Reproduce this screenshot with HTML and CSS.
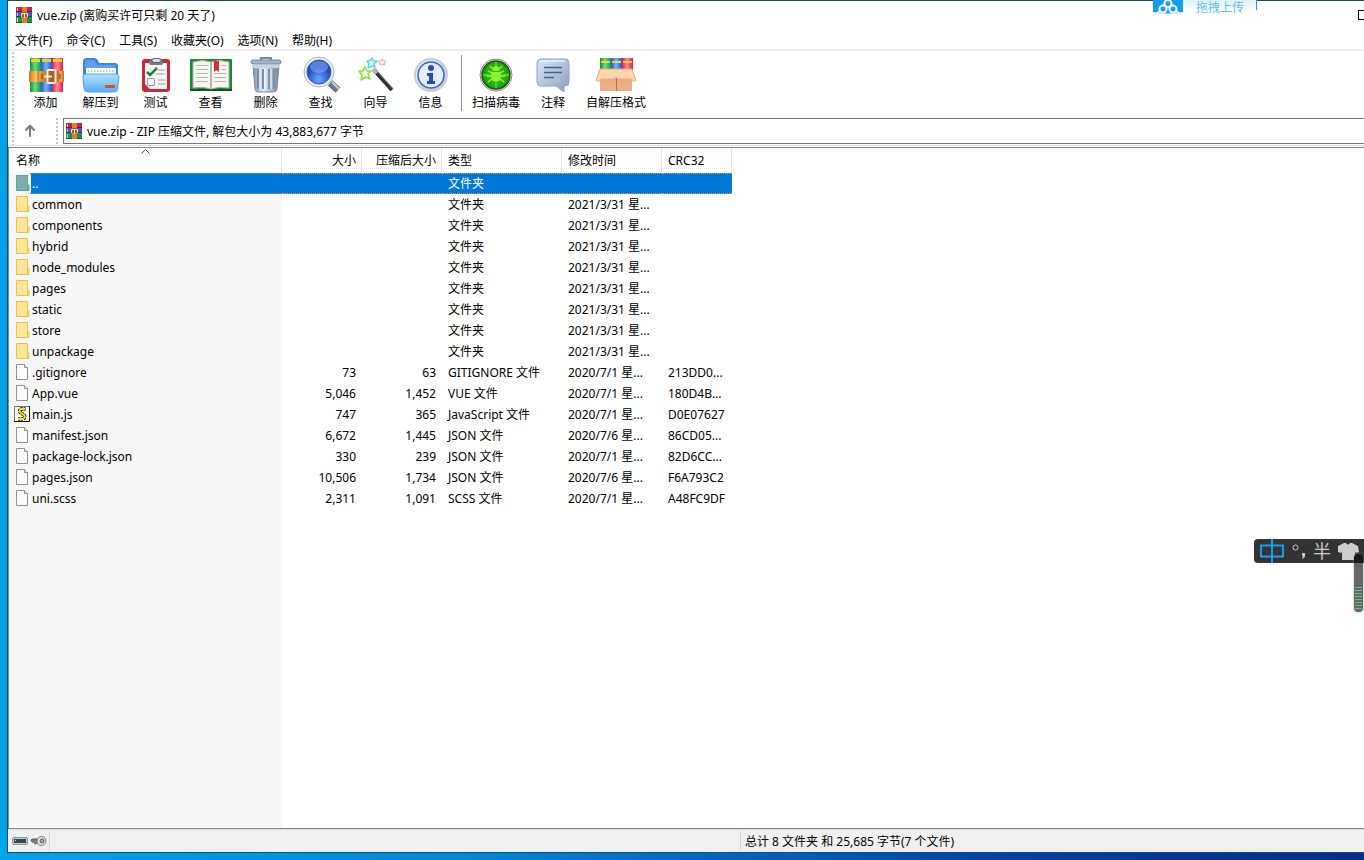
FILE: index.html
```html
<!DOCTYPE html>
<html lang="zh-CN">
<head>
<meta charset="utf-8">
<title>vue.zip</title>
<link rel="stylesheet" href="styles.css">
</head>
<body>
<svg class="defs" width="0" height="0" aria-hidden="true">
  <defs>
    <linearGradient id="gGreen"><stop offset="0" stop-color="#0c8a3c"/><stop offset=".45" stop-color="#6fdc7e"/><stop offset="1" stop-color="#139a40"/></linearGradient>
    <linearGradient id="gBlue"><stop offset="0" stop-color="#1f55d4"/><stop offset=".45" stop-color="#74b0ff"/><stop offset="1" stop-color="#2058d0"/></linearGradient>
    <linearGradient id="gRed"><stop offset="0" stop-color="#e0183c"/><stop offset=".45" stop-color="#ff8da2"/><stop offset="1" stop-color="#e81c40"/></linearGradient>
    <linearGradient id="gBelt"><stop offset="0" stop-color="#c87818"/><stop offset=".2" stop-color="#ffc860"/><stop offset=".4" stop-color="#d08424"/><stop offset=".75" stop-color="#b86c1c"/><stop offset=".9" stop-color="#f4ac4c"/><stop offset="1" stop-color="#c07420"/></linearGradient>
    <linearGradient id="gFolder" x2="0" y2="1"><stop offset="0" stop-color="#b4e4ff"/><stop offset="1" stop-color="#54acf8"/></linearGradient>
    <linearGradient id="gMetal"><stop offset="0" stop-color="#7890a6"/><stop offset=".4" stop-color="#e6eff7"/><stop offset="1" stop-color="#71899f"/></linearGradient>
    <linearGradient id="gSilver" x2="1" y2="1"><stop offset="0" stop-color="#fafcff"/><stop offset="1" stop-color="#b4c0cd"/></linearGradient>
    <linearGradient id="gNote" x2="1" y2="1"><stop offset="0" stop-color="#d9e6f5"/><stop offset=".5" stop-color="#afc4de"/><stop offset="1" stop-color="#869fc0"/></linearGradient>
    <linearGradient id="gBox" x2="0" y2="1"><stop offset="0" stop-color="#e8a880"/><stop offset="1" stop-color="#f0b08a"/></linearGradient>
    <radialGradient id="gLens" cy=".8"><stop offset="0" stop-color="#6ba8ff"/><stop offset="1" stop-color="#2450c4"/></radialGradient>
    <radialGradient id="gVirus"><stop offset="0" stop-color="#44dc14"/><stop offset="1" stop-color="#189a0c"/></radialGradient>
    <symbol id="rar" viewBox="0 0 16 16">
      <path fill="#c8204e" d="M0 0h16v5H0z"/><path fill="#4658c0" d="M0 5h16v5H0z"/><path fill="#189246" d="M0 10h16v6H0z"/>
      <path fill="#7c1038" d="M0 4h16v1H0z"/><path fill="#28308c" d="M0 9h16v1H0z"/><path fill="#085a26" d="M0 15h16v1H0z"/>
      <path fill="#f4d462" d="M1 1h1v3H1zM1 6h1v3H1zM1 11h1v4H1z"/>
      <path fill="#e87c24" d="M6 0h5v16H6z"/><path fill="#b4501c" d="M6 5h5v5H6z"/>
      <path d="M5.500 10V6.500h6V10" fill="none" stroke="#e8e0e8"/><path fill="#f8f8f8" d="M8 6h1v5H8z"/>
    </symbol>
    <symbol id="folder" viewBox="0 0 14 16"><path d="M.5.500h11v9.500H13v5.500H.5z" fill="#ffe595" stroke="#e9c153"/><path d="M11.500 10v5" stroke="#e9c153"/></symbol>
    <symbol id="folder-selected" viewBox="0 0 14 16"><path d="M.5.500h11v9.500H13v5.500H.5z" fill="#7cacb4" stroke="#6f9d93"/><path d="M11.500 10v5" stroke="#6f9d93"/></symbol>
    <symbol id="file" viewBox="0 0 14 16"><path d="M.5.500h8l3 3v12H.5z" fill="#fcfcfc" stroke="#929292"/><path d="M8.500.500v3h3" fill="#eee" stroke="#929292"/></symbol>
    <symbol id="script" viewBox="0 0 16 16"><path fill="#fff" stroke="#777" d="M.5.500h15v15H.5z"/><path d="M15.500 0v15.500H0" fill="none" stroke="#111"/><path d="M11.500 3H7Q4 5 7 7l3 2q2 2-1 4H4" fill="none" stroke="#111" stroke-width="3.500" stroke-dasharray="2 .6"/><path d="M11 3H7Q4 5 7 7l3 2q2 2-1 4H4" fill="none" stroke="#f1e21c" stroke-width="1.800"/></symbol>
  </defs>
</svg>

<main class="window">
  <header class="titlebar">
    <svg class="app-icon"><use href="#rar"/></svg>
    <h1 class="title">vue.zip (离购买许可只剩 20 天了)</h1>
  </header>

  <nav class="menu">
    <button>文件(F)</button><button>命令(C)</button><button>工具(S)</button><button>收藏夹(O)</button><button>选项(N)</button><button>帮助(H)</button>
  </nav>

  <section class="bars">
    <div class="grip"></div>
    <div class="bars-body">
      <div class="toolbar">
        <button class="tool">
          <svg viewBox="0 0 44 38"><path fill="url(#gGreen)" d="M6 2h11v34H6z"/><path fill="url(#gBlue)" d="M17 2h11v34H17z"/><path fill="url(#gRed)" d="M28 2h11v34H28z"/><path fill="#f6cf2a" d="M7 3h9v3H7zM18 3h9v3h-9zM29 3h9v3h-9z"/><path fill="url(#gBelt)" d="M5 15h35v11H5z"/><path d="M14 15v11M34 15v11" stroke="#854108" stroke-opacity=".6"/><rect x="23.500" y="14" width="8" height="13" rx="1" fill="#a8601c" stroke="#f4ece0" stroke-width="2"/><path d="M20 20.500h8" stroke="#f4ece0" stroke-width="2"/><path d="M18 18v5M36 18v5" stroke="#704010"/></svg>
          <span>添加</span></button>
        <button class="tool">
          <svg viewBox="0 0 44 38"><path fill="#3d82e8" d="M4 6q0-4 4-4h7q3 0 4 3l1 2h16q3 0 3 3v20H4z"/><path fill="#5ea0f8" d="M6 6q0-2 3-2h5q2 0 4 5h18v5H6z"/><path fill="#fff" d="M7 12h30v12H7z"/><path stroke="#b7c7d8" stroke-width="2" stroke-dasharray="1.500 1.500" d="M9 15h26"/><path fill="url(#gFolder)" stroke="#52a6ec" d="M4 20q0-2 3-2h30q3 0 3 3-1 5-1 10 0 5-4 5H9q-4 0-4-4-1-6-1-12z"/><path fill="#df4b22" d="M26 29h10v3H26z"/></svg>
          <span>解压到</span></button>
        <button class="tool">
          <svg viewBox="0 0 44 38"><rect x="8" y="3" width="28" height="33" rx="3" fill="#c92834"/><path fill="#f7f7f7" d="M11 7h22v26H16l-5-5z"/><path fill="#d8dde0" d="M11 28l5 5v-5z"/><rect x="15" y="4" width="14" height="5" rx="2" fill="#777c82"/><rect x="18" y="2.500" width="9" height="4" rx="2" fill="#d7dade" stroke="#62676c"/><path d="M13 16l3 3 7-7" fill="none" stroke="#168832" stroke-width="2.500"/><path d="M24 14h7M22 18h9M24 24h7M24 28h7" stroke="#999"/><path fill="#fafafa" stroke="#999" d="M13.500 22.500h7v7h-7z"/></svg>
          <span>测试</span></button>
        <button class="tool">
          <svg viewBox="0 0 44 38"><rect x="1" y="3" width="42" height="32" rx="1" fill="#1a8a32"/><path fill="#0b591d" d="M1 33h42v2H1z"/><path fill="#f7f5ef" stroke="#b4b0a7" d="M4 6q10-3 18 0 8-3 18 0v26q-10-2-18 1-8-3-18-1z"/><path stroke="#b9b5ad" stroke-width="2" d="M22 6v27"/><path stroke="#b8b6b3" d="M7 9.500h12M7 13.500h12M7 17.500h12M7 21.500h12M7 25.500h12M25 17.500h12M25 21.500h12M25 25.500h12M32 9.500h5M32 13.500h5"/><path fill="#d32c37" d="M25 5h5v11l-2.500-2-2.500 2z"/></svg>
          <span>查看</span></button>
        <button class="tool">
          <svg viewBox="0 0 44 38"><path d="M17 5V2h10v3" fill="none" stroke="#778b9f" stroke-width="2"/><rect x="7" y="4" width="30" height="4" rx="2" fill="#a3b6c8" stroke="#71869c"/><path fill="url(#gMetal)" stroke="#768ea4" d="M9 10h26l-2 23q0 3-4 3H15q-4 0-4-3z"/><path d="M14 13v20M19 13v20M25 13v20M30 13v20" stroke="#7890a8" stroke-width="2"/><path d="M16 13v20M21 13v20M27 13v20" stroke="#f5f9fc"/><path fill="#c8d6e2" d="M8 9h28v3H8z"/></svg>
          <span>删除</span></button>
        <button class="tool">
          <svg viewBox="0 0 44 38"><path d="M31 27l8 7" stroke="#707880" stroke-width="7"/><path d="M33 26l7 7" stroke="#c9ced4" stroke-width="2"/><circle cx="20" cy="16" r="15" fill="#e8edf3" stroke="#adb8c4"/><circle cx="20" cy="16" r="12" fill="url(#gLens)" stroke="#3a5ea8"/><ellipse cx="20" cy="11" rx="9" ry="6" fill="#9bbcff" opacity=".45"/></svg>
          <span>查找</span></button>
        <button class="tool">
          <svg viewBox="0 0 44 38"><path d="M20 14l18 20" stroke="#303030" stroke-width="4"/><path d="M19 13l4 4" stroke="#b5b5b5" stroke-width="4"/><path d="M22 14l17 19" stroke="#999" stroke-width=".7"/><g fill="#f8fff4" stroke-width="1.500" stroke-linejoin="round"><path stroke="#84e236" d="M11 11l2 4 4 0-3 3 2 5-4-2-5 3 1-5-3-4 4 0z"/><path stroke="#5ad4f2" d="M18 2l1 3 4 0-3 3 1 3-3-1-4 2 1-4-2-3 3 0z"/><path stroke="#f0a4a4" stroke-width="1" d="M28 3l1 2 3 0-2 2 1 2-3-1-2 1 0-2-2-2 3 0z"/></g></svg>
          <span>向导</span></button>
        <button class="tool">
          <svg viewBox="0 0 44 38"><circle cx="22" cy="19" r="16" fill="url(#gSilver)" stroke="#c5ced9" stroke-width="2"/><circle cx="22" cy="19" r="13" fill="#e6edf5" stroke="#3a66c0" stroke-width="1.500"/><circle cx="22" cy="12" r="3" fill="#234db1"/><path fill="#234db1" d="M18 17h6v8h2v3h-8v-3h2v-5h-2z"/></svg>
          <span>信息</span></button>
        <div class="divider"></div>
        <button class="tool tool-wide">
          <svg viewBox="0 0 44 38"><circle cx="22" cy="19" r="16" fill="#eee" stroke="#888"/><circle cx="22" cy="19" r="14" fill="url(#gVirus)" stroke="#245020" stroke-width="1.500"/><path d="M22 6v5M22 27v5M9 19h5M30 19h5" stroke="#7cf03c"/><g fill="none" stroke="#98f537" stroke-width="1.300"><path d="M19 13l-3-3M25 13l3-3M18 17l-4-2M26 17l4-2M17 20h-4M27 20h4M18 23l-4 3M26 23l4 3"/></g><ellipse cx="22" cy="20" rx="5" ry="6" fill="#8cf030"/><circle cx="22" cy="13" r="3" fill="#8cf030"/><path stroke="#34a918" d="M19 15.500h6"/></svg>
          <span>扫描病毒</span></button>
        <button class="tool tool-narrow">
          <svg viewBox="0 0 44 38"><path d="M10 3h24q4 0 4 4v19q0 4-4 4h-1v6l-8-6H10q-4 0-4-4V7q0-4 4-4z" fill="url(#gNote)" stroke="#8ca2c0"/><path d="M9 5h25" stroke="#edf5fe" stroke-width="1.500"/><path d="M13 11.500h18M13 16.500h18M13 21.500h10" stroke="#4b5f80" stroke-width="1.500"/></svg>
          <span>注释</span></button>
        <button class="tool tool-sfx">
          <svg viewBox="0 0 44 38"><path fill="url(#gGreen)" d="M6 2h11v14H6z"/><path fill="url(#gBlue)" d="M17 2h11v14H17z"/><path fill="url(#gRed)" d="M28 2h11v14H28z"/><path fill="#f6cf2a" d="M7 5h9v2H7zM18 5h9v2h-9zM29 5h9v2h-9z"/><path fill="url(#gBox)" d="M6 14h32v21H6z"/><path fill="#ffd6ad" stroke="#e8ab80" d="M6 13h32l4 12h-4l-1-2H23l-1-2-1 2H7l-1 2H2z"/><path stroke="#bd714b" d="M22.500 22v13"/></svg>
          <span>自解压格式</span></button>
      </div>
      <div class="address-row">
        <button class="up" aria-label="上一级"><svg viewBox="0 0 12 12"><path d="M6 11V2M2 5.500L6 1.500l4 4" fill="none" stroke="#7d7d7d" stroke-width="1.800"/></svg></button>
        <div class="grip"></div>
        <label class="address"><svg class="app-icon"><use href="#rar"/></svg><input aria-label="路径" value="vue.zip - ZIP 压缩文件, 解包大小为 43,883,677 字节"></label>
      </div>
    </div>
  </section>

  <section class="listing">
    <table class="files">
      <colgroup><col class="c-name"><col class="c-size"><col class="c-size"><col class="c-type"><col class="c-time"><col class="c-crc"></colgroup>
      <thead><tr><th class="sorted">名称<svg class="caret" viewBox="0 0 9 5"><path d="M.5 4.500l4-4 4 4" fill="none" stroke="#555"/></svg></th><th class="num">大小</th><th class="num">压缩后大小</th><th>类型</th><th>修改时间</th><th>CRC32</th></tr></thead>
      <tbody>
        <tr class="selected"><td><svg class="ico"><use href="#folder-selected"/></svg>..</td><td></td><td></td><td>文件夹</td><td></td><td></td></tr>
        <tr><td><svg class="ico"><use href="#folder"/></svg>common</td><td></td><td></td><td>文件夹</td><td>2021/3/31 星...</td><td></td></tr>
        <tr><td><svg class="ico"><use href="#folder"/></svg>components</td><td></td><td></td><td>文件夹</td><td>2021/3/31 星...</td><td></td></tr>
        <tr><td><svg class="ico"><use href="#folder"/></svg>hybrid</td><td></td><td></td><td>文件夹</td><td>2021/3/31 星...</td><td></td></tr>
        <tr><td><svg class="ico"><use href="#folder"/></svg>node_modules</td><td></td><td></td><td>文件夹</td><td>2021/3/31 星...</td><td></td></tr>
        <tr><td><svg class="ico"><use href="#folder"/></svg>pages</td><td></td><td></td><td>文件夹</td><td>2021/3/31 星...</td><td></td></tr>
        <tr><td><svg class="ico"><use href="#folder"/></svg>static</td><td></td><td></td><td>文件夹</td><td>2021/3/31 星...</td><td></td></tr>
        <tr><td><svg class="ico"><use href="#folder"/></svg>store</td><td></td><td></td><td>文件夹</td><td>2021/3/31 星...</td><td></td></tr>
        <tr><td><svg class="ico"><use href="#folder"/></svg>unpackage</td><td></td><td></td><td>文件夹</td><td>2021/3/31 星...</td><td></td></tr>
        <tr><td><svg class="ico"><use href="#file"/></svg>.gitignore</td><td class="num">73</td><td class="num">63</td><td>GITIGNORE 文件</td><td>2020/7/1 星...</td><td>213DD0...</td></tr>
        <tr><td><svg class="ico"><use href="#file"/></svg>App.vue</td><td class="num">5,046</td><td class="num">1,452</td><td>VUE 文件</td><td>2020/7/1 星...</td><td>180D4B...</td></tr>
        <tr><td><svg class="ico ico-script"><use href="#script"/></svg>main.js</td><td class="num">747</td><td class="num">365</td><td>JavaScript 文件</td><td>2020/7/1 星...</td><td>D0E07627</td></tr>
        <tr><td><svg class="ico"><use href="#file"/></svg>manifest.json</td><td class="num">6,672</td><td class="num">1,445</td><td>JSON 文件</td><td>2020/7/6 星...</td><td>86CD05...</td></tr>
        <tr><td><svg class="ico"><use href="#file"/></svg>package-lock.json</td><td class="num">330</td><td class="num">239</td><td>JSON 文件</td><td>2020/7/1 星...</td><td>82D6CC...</td></tr>
        <tr><td><svg class="ico"><use href="#file"/></svg>pages.json</td><td class="num">10,506</td><td class="num">1,734</td><td>JSON 文件</td><td>2020/7/6 星...</td><td>F6A793C2</td></tr>
        <tr><td><svg class="ico"><use href="#file"/></svg>uni.scss</td><td class="num">2,311</td><td class="num">1,091</td><td>SCSS 文件</td><td>2020/7/1 星...</td><td>A48FC9DF</td></tr>
      </tbody>
    </table>
  </section>

  <footer class="status">
    <div class="status-left">
      <svg width="16" height="10" viewBox="0 0 16 10"><rect x=".5" y="1.500" width="15" height="7" rx="1.500" fill="#b9ced9" stroke="#7f9aa8"/><path fill="#3c464c" d="M2 3h12v4H2z"/><path fill="#ddd" d="M3 4h1v1H3z"/></svg>
      <svg width="17" height="12" viewBox="0 0 17 12"><path d="M9 4H2L1 5l1 2h2l1 2 2-1h3" fill="#777d82" stroke="#555b60"/><circle cx="11.500" cy="6" r="4.500" fill="#e5e8ea" stroke="#6e7479"/><circle cx="12" cy="6" r="2" fill="#aaa" stroke="#555"/></svg>
    </div>
    <div class="status-mid"></div>
    <div class="status-total">总计 8 文件夹 和 25,685 字节(7 个文件)</div>
  </footer>
</main>

<div class="upload">
  <svg viewBox="0 0 30 15"><path fill="#159cf8" d="M0 0h30v12q-15 3-30 0z"/><g fill="#159cf8" stroke="#fff" stroke-width="2"><circle cx="15" cy="3.500" r="3.500"/><circle cx="10" cy="9" r="3.500"/><circle cx="20" cy="9" r="3.500"/></g><path d="M3 14l4-3M27 14l-4-3" stroke="#fff" stroke-width="2"/></svg>
  <div class="upload-text">拖拽上传</div>
</div>
<button class="maximize" aria-label="最大化"></button>
<div class="ime">
  <svg viewBox="0 0 110 24">
    <path d="M7 6.500h22v11H7zM18 0v24" fill="none" stroke="#149cf0" stroke-width="2"/>
    <circle cx="41.500" cy="8.500" r="2.500" fill="none" stroke="#ccc"/>
    <path d="M48 14h3v3q0 2-3 3l1-3h-1z" fill="#ccc"/>
    <path fill="#ccc" d="M84 7l6-3h2q2 3 4 0h2l6 3 1 6-3 1-1-1v8H88v-8l-1 1-3-1z"/>
  </svg>
  <span class="ime-half">半</span>
</div>
<div class="meter"><div class="meter-fill"></div></div>
</body>
</html>
```
FILE: styles.css
```css
* { box-sizing: border-box; }
body {
  margin: 0;
  height: 100vh;
  overflow: hidden;
  position: relative;
  display: flex;
  padding: 0 0 7px 7px;
  background: linear-gradient(90deg, #00a4ea 0, #0087d4 35%, #0567c2 50%, #073f9f 75%, #082c86 100%);
  color: #000;
  font: 12px/16px "Noto Sans", "Noto Sans CJK SC", sans-serif;
}
button, input { font: inherit; color: inherit; border: 0; padding: 0; background: none; }
.defs { position: absolute; }
.window {
  flex: 1;
  display: flex;
  flex-direction: column;
  min-width: 0;
  background: #fff;
  border: 1px solid #1c4a70;
  border-right: 0;
}
.titlebar { display: flex; align-items: center; gap: 5px; height: 28px; padding-left: 8px; }
.title { margin: 0; font-size: 12px; font-weight: 400; line-height: 18px; padding-top: 2px; }
.app-icon { width: 16px; height: 16px; flex: none; }
.menu { display: flex; gap: 14px; height: 22px; padding: 3px 0 0 7px; border-bottom: 2px solid #efefef; }
.bars { display: flex; height: 95px; padding-left: 4px; border-bottom: 1px solid #dcdcdc; }
.grip { width: 2px; margin-top: 1px; background: repeating-linear-gradient(#c4c4c4 0 2px, #fff 2px 4px); }
.bars-body { flex: 1; min-width: 0; }
.toolbar { display: flex; height: 66px; padding-left: 4px; }
.tool { width: 55px; display: flex; flex-direction: column; align-items: center; padding-top: 5px; white-space: nowrap; }
.tool svg { width: 44px; height: 38px; flex: none; }
.tool span { line-height: 18px; }
.tool-wide { width: 68px; }
.tool-narrow { width: 46px; }
.tool-sfx { width: 80px; }
.divider { width: 1px; height: 56px; margin: 4px 0 0 3px; background: #8c8c8c; }
.address-row { display: flex; height: 27px; }
.up { width: 42px; padding: 0 11px 0 9px; display: flex; align-items: center; }
.up svg { width: 14px; height: 14px; }
.address { flex: 1; display: flex; align-items: center; gap: 5px; height: 26px; margin: 1px 0 0 5px; padding-left: 2px; border: 1px solid #777; border-right: 0; }
.address input { flex: 1; min-width: 0; outline: 0; padding-top: 2px; }
.listing {
  flex: 1;
  min-height: 0;
  margin-top: 1px;
  border-top: 1px solid #828790;
  border-left: 1px solid #828790;
  border-bottom: 1px solid #828790;
  background: linear-gradient(90deg, #f7f7f7 273px, #fff 273px);
}
.files { width: 723px; table-layout: fixed; border-collapse: separate; border-spacing: 0; white-space: nowrap; }
.c-name { width: 273px; }
.c-size { width: 80px; }
.c-type { width: 120px; }
.c-time { width: 100px; }
.c-crc { width: 70px; }
.files th { height: 25px; padding: 0 5px 0 6px; background: #fff; border-right: 1px solid #e5e5e5; font-weight: 400; text-align: left; }
.files td { height: 21px; padding: 0 6px; line-height: 21px; }
.files td:first-child, .files .sorted { padding-left: 7px; }
.files .num { text-align: right; padding-left: 0; }
.sorted { position: relative; }
.caret { position: absolute; top: 1px; left: calc(50% - 4px); width: 9px; height: 5px; }
.ico { width: 14px; height: 16px; margin: 2px 2px 0 0; vertical-align: top; }
.ico-script { width: 16px; margin: 2px 2px 0 -2px; }
.files .selected td { background: #0078d7; color: #fff; border: 1px dotted #e89850; border-width: 1px 0; line-height: 19px; }
.files .selected td:first-child { background: linear-gradient(90deg, #f7f7f7 22px, #0078d7 22px); border-image: linear-gradient(90deg, #f7f7f7 22px, #4388b8 22px) 1; }
.selected .ico { margin-top: 1px; }
.status { display: flex; height: 23px; align-items: center; border-top: 1px solid #dadada; background: #f0f0f0; }
.status-left { display: flex; align-items: center; gap: 2px; height: 20px; width: 42px; padding-left: 4px; border-right: 1px solid #d7d7d7; }
.status-mid { flex: 0 0 690px; }
.status-total { height: 20px; padding-left: 4px; border-left: 1px solid #d7d7d7; line-height: 22px; }
.upload { position: absolute; top: 0; right: 107px; display: flex; width: 104px; }
.upload svg { width: 30px; height: 15px; }
.upload-text { flex: 1; height: 16px; padding-left: 13px; line-height: 16px; background: linear-gradient(#def3ff, #fff 12px); border-right: 1px solid #159cf8; border-image: linear-gradient(#159cf8 10px, #fff 10px) 1; color: #5cbcf8; }
.maximize { position: absolute; top: 10px; right: -4px; width: 10px; height: 10px; border: 1px solid #000; }
.ime { position: absolute; top: 539px; right: 0; width: 110px; height: 24px; border-radius: 4px 0 0 4px; background: #333; }
.ime svg { display: block; width: 110px; height: 24px; }
.ime-half { position: absolute; left: 59px; top: 0; font-size: 18px; line-height: 24px; color: #ccc; }
.meter { position: absolute; top: 554px; right: 1px; width: 9px; height: 58px; padding: 33px 1px 2px; border-radius: 4px; background: linear-gradient(#181818 9px, #666 9px); box-shadow: 0 0 2px #999; }
.meter-fill { height: 100%; background: repeating-linear-gradient(#54c878 0 1px, #666 1px 3px); }
```
